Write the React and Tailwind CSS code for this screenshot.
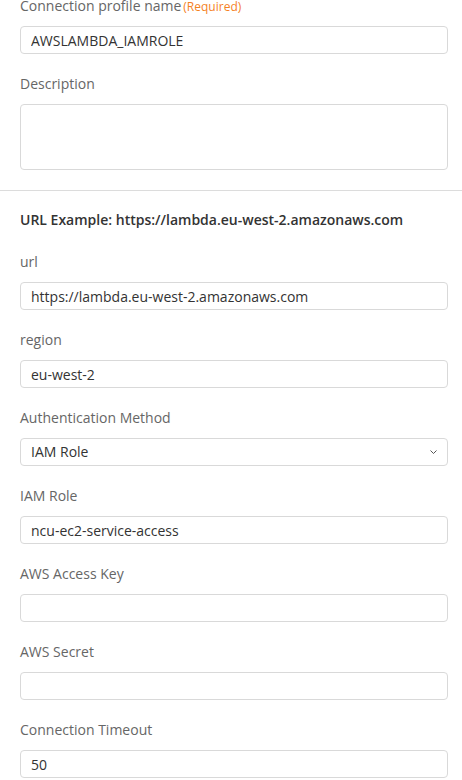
import { useState } from "react";

const font = { fontFamily: '"Open Sans", "Noto Sans", sans-serif' };

const Field = ({ label, value, required }) => (
  <div className="pb-5">
    <div className="h-5 leading-5 text-sm text-[#666] mb-2.5">
      {label}
      {required && <span className="text-xs text-[#f5821f] ml-0.5">(Required)</span>}
    </div>
    <input
      readOnly
      value={value}
      className="block w-full h-7 border border-[#d9d9d9] rounded-sm px-2.5 text-sm text-[#333] outline-none"
    />
  </div>
);

const App = () => {
  const [auth] = useState("IAM Role");

  return (
    <div className="bg-white w-[462px] h-[780px] overflow-hidden" style={font}>
      <div className="pl-5 pr-[14px] -mt-[4px]">
        <Field label="Connection profile name" value="AWSLAMBDA_IAMROLE" required />
        <div className="pb-5">
          <div className="h-5 leading-5 text-sm text-[#666] mb-2.5">Description</div>
          <textarea
            readOnly
            className="block w-full h-[66px] border border-[#d9d9d9] rounded-sm px-2.5 text-sm resize-none outline-none"
          />
        </div>
      </div>
      <hr className="border-0 border-t border-[#dcdcdc]" />
      <div className="pl-5 pr-[14px] pt-[19px]">
        <div className="h-5 leading-5 text-sm font-semibold text-[#333] mb-[22px]">
          URL Example: https://lambda.eu-west-2.amazonaws.com
        </div>
        <Field label="url" value="https://lambda.eu-west-2.amazonaws.com" />
        <Field label="region" value="eu-west-2" />
        <div className="pb-5">
          <div className="h-5 leading-5 text-sm text-[#666] mb-2.5">Authentication Method</div>
          <div className="flex items-center justify-between h-7 border border-[#d9d9d9] rounded-sm pl-2.5 pr-2.5 text-sm text-[#333]">
            <span>{auth}</span>
            <svg width="7" height="4" viewBox="0 0 7 4" fill="none" stroke="#555" strokeWidth="1">
              <path d="M0.5 0.5 L3.5 3.5 L6.5 0.5" />
            </svg>
          </div>
        </div>
        <Field label="IAM Role" value="ncu-ec2-service-access" />
        <Field label="AWS Access Key" value="" />
        <Field label="AWS Secret" value="" />
        <Field label="Connection Timeout" value="50" />
      </div>
    </div>
  );
};

export default App;
